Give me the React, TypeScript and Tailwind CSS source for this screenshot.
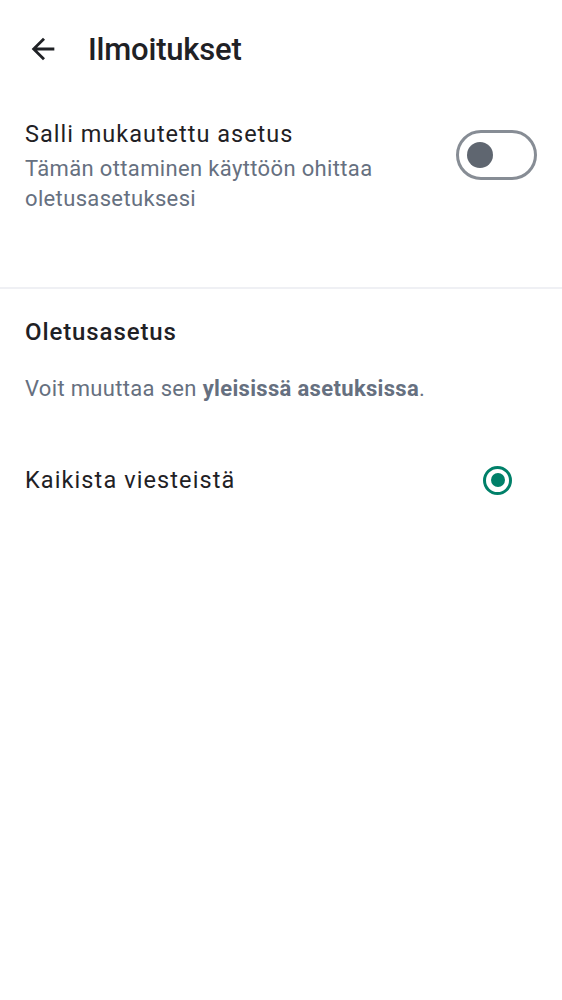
function ArrowBack() {
  return (
    <svg viewBox="0 0 24 24" className="size-[34px] text-[#1f2125]" fill="currentColor">
      <path d="M20 11H7.83l5.59-5.59L12 4l-8 8 8 8 1.41-1.41L7.83 13H20v-2z" />
    </svg>
  );
}

function Toggle() {
  return (
    <div className="w-[81px] h-[50px] rounded-full border-[3px] border-[#878d95] flex items-center px-[8px]">
      <div className="size-[26px] rounded-full bg-[#5f6670]" />
    </div>
  );
}

function Radio() {
  return (
    <div className="size-[29px] rounded-full border-[3px] border-[#008069] flex items-center justify-center">
      <div className="size-[14px] rounded-full bg-[#008069]" />
    </div>
  );
}

export default function App() {
  return (
    <div className="w-[562px] h-[1000px] bg-white font-['Roboto',sans-serif] text-[#1f2125]">
      <header className="h-[98px] flex items-center pl-[26px]">
        <ArrowBack />
        <h1 className="ml-[28px] text-[31px] font-medium leading-none tracking-[-0.2px]">Ilmoitukset</h1>
      </header>

      <div className="flex items-start justify-between pl-[25px] pr-[25px] pt-[21px] pb-[73px] border-b-[2px] border-[#eff0f4]">
        <div>
          <div className="text-[23.5px] leading-[30px] tracking-[1px]">Salli mukautettu asetus</div>
          <div className="mt-[5px] w-[380px] text-[22px] leading-[30px] tracking-[0.35px] text-[#667080]">
            Tämän ottaminen käyttöön ohittaa oletusasetuksesi
          </div>
        </div>
        <div className="mt-[11px]">
          <Toggle />
        </div>
      </div>

      <div className="px-[25px] pt-[28px]">
        <div className="text-[24px] leading-[30px] font-medium tracking-[0.9px]">Oletusasetus</div>
        <div className="mt-[27px] text-[22px] leading-[30px] tracking-[0.33px] text-[#667080]">
          Voit muuttaa sen <span className="font-bold">yleisissä asetuksissa</span>.
        </div>
        <div className="mt-[61px] flex items-center justify-between pr-[25px]">
          <div className="text-[23.5px] leading-[30px] tracking-[1.1px]">Kaikista viesteistä</div>
          <Radio />
        </div>
      </div>
    </div>
  );
}
